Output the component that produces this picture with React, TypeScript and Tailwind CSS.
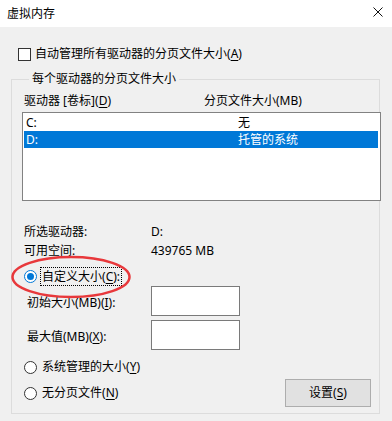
import React from 'react'

const font = "font-['Noto_Sans','Noto_Sans_CJK_SC',sans-serif]"

function Key({ k }: { k: string }) {
  return (
    <>
      (<span className="underline underline-offset-2">{k}</span>)
    </>
  )
}

function Radio({ checked = false }: { checked?: boolean }) {
  return (
    <span
      className={
        'flex h-[13px] w-[13px] shrink-0 items-center justify-center rounded-full border bg-white ' +
        (checked ? 'border-[#0078d7]' : 'border-[#333333]')
      }
    >
      {checked && <span className="h-[7px] w-[7px] rounded-full bg-[#0078d7]" />}
    </span>
  )
}

export default function App() {
  return (
    <div className={`${font} flex h-[421px] w-[392px] flex-col bg-[#f0f0f0] text-[12px] leading-[16px] text-black`}>
      {/* title bar */}
      <div className="flex h-[27px] shrink-0 items-center justify-between bg-white pl-[7px] pr-[9px]">
        <span>虚拟内存</span>
        <svg width="10" height="10" viewBox="0 0 10 10" className="mt-[-3px]">
          <path d="M0.5 0.5 L9.5 9.5 M9.5 0.5 L0.5 9.5" stroke="#111" strokeWidth="1" />
        </svg>
      </div>

      {/* auto manage */}
      <div className="ml-[18px] mt-[20px] flex h-[14px] items-center gap-[4px]">
        <span className="h-[13px] w-[13px] shrink-0 border border-[#333333] bg-white" />
        <span>
          自动管理所有驱动器的分页文件大小<Key k="A" />
        </span>
      </div>

      <fieldset className="ml-[11px] mt-[10px] w-[369px] border border-[#dcdcdc] pb-[6px] pl-[12px] pr-[8px]">
        <legend className="ml-[5px] px-[3px] leading-[16px]">每个驱动器的分页文件大小</legend>

        <div className="mt-[6px] flex">
          <span className="w-[180px]">
            驱动器 [卷标]<Key k="D" />
          </span>
          <span>分页文件大小(MB)</span>
        </div>

        <div className="mr-[-10px] ml-[-2px] mt-[3px] h-[89px] border border-[#828282] bg-white p-px">
          <div className="flex h-[17px] items-center pl-[2px]">
            <span className="w-[212px]">C:</span>
            <span>无</span>
          </div>
          <div className="mr-px flex h-[17px] items-center bg-[#0078d7] pl-[2px] text-white">
            <span className="w-[212px]">D:</span>
            <span>托管的系统</span>
          </div>
        </div>

        <div className="mt-[23px] flex">
          <span className="w-[127px]">所选驱动器:</span>
          <span>D:</span>
        </div>
        <div className="mt-[3px] flex">
          <span className="w-[127px]">可用空间:</span>
          <span>439765 MB</span>
        </div>

        <div className="relative mt-[8px] flex h-[19px] items-center gap-[3px]">
          <Radio checked />
          <span className="border border-dotted border-black px-px leading-[17px]">
            自定义大小<Key k="C" />:
          </span>
          {/* red annotation ring */}
          <svg
            className="pointer-events-none absolute left-[-13px] top-[-12px] h-[44px] w-[122px]"
            width="122"
            height="44"
            viewBox="0 0 122 44"
          >
            <ellipse cx="60" cy="22" rx="58.5" ry="20" fill="none" stroke="#e8383b" strokeWidth="2.5" />
          </svg>
        </div>

        <div className="flex items-center">
          <span className="mt-[3px] w-[127px] pl-[3px]">
            初始大小(MB)<Key k="I" />:
          </span>
          <span className="h-[30px] w-[89px] border border-[#7a7a7a] bg-white" />
        </div>
        <div className="mt-[4px] flex items-center">
          <span className="mt-[3px] w-[127px] pl-[3px]">
            最大值(MB)<Key k="X" />:
          </span>
          <span className="h-[30px] w-[89px] border border-[#7a7a7a] bg-white" />
        </div>

        <div className="mt-[9px] flex h-[16px] items-center gap-[5px]">
          <Radio />
          <span>
            系统管理的大小<Key k="Y" />
          </span>
        </div>

        <div className="mt-[4px] flex h-[28px] items-center justify-between">
          <div className="flex items-center gap-[5px]">
            <Radio />
            <span>
              无分页文件<Key k="N" />
            </span>
          </div>
          <button className="flex h-[28px] w-[86px] items-center justify-center border border-[#adadad] bg-[#e1e1e1]">
            设置<Key k="S" />
          </button>
        </div>
      </fieldset>
    </div>
  )
}
